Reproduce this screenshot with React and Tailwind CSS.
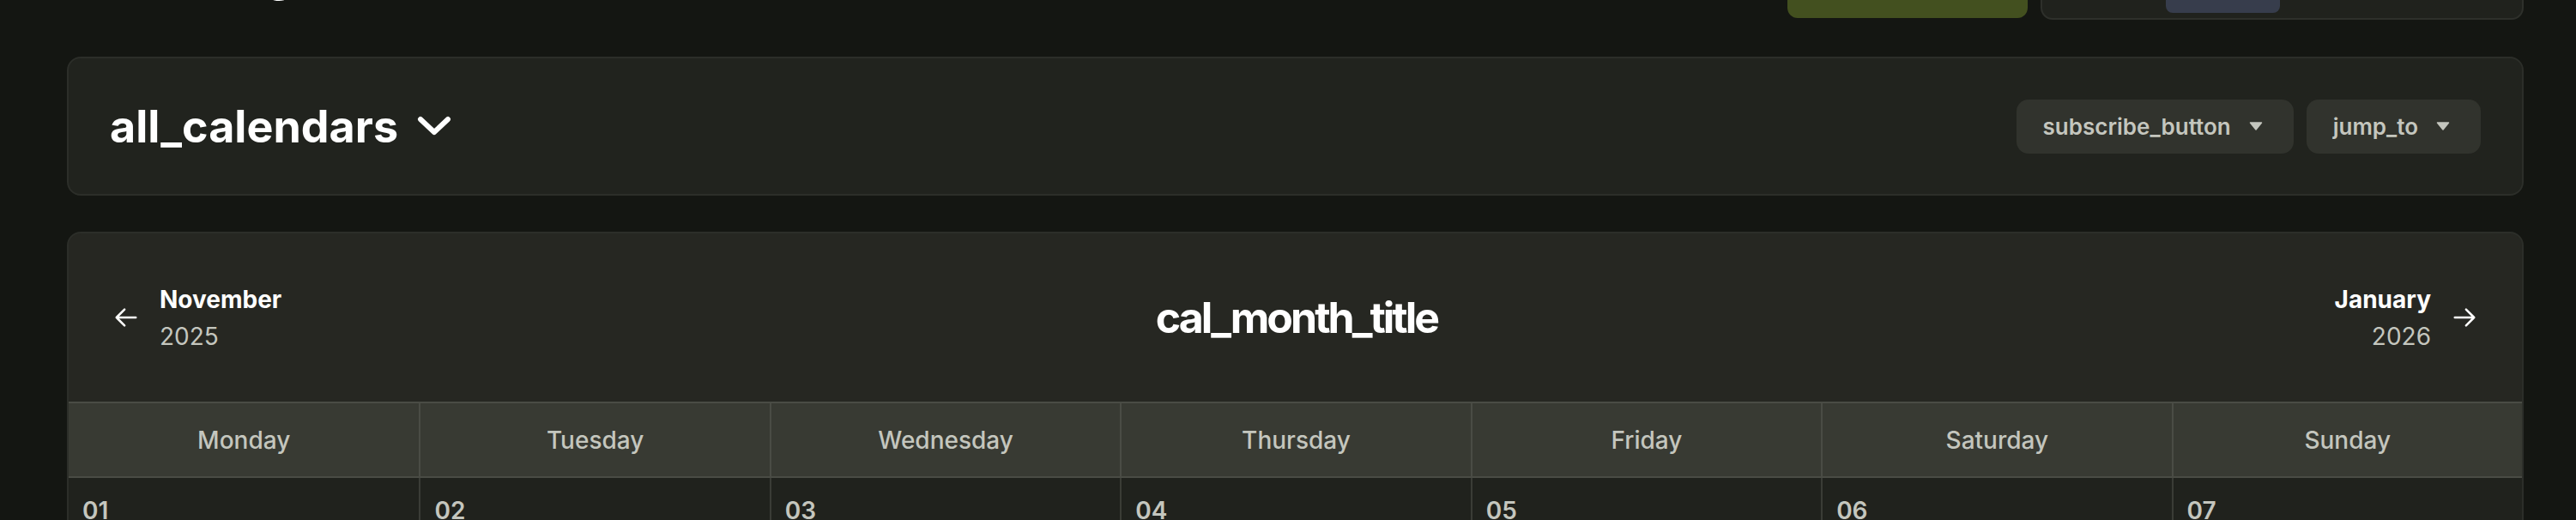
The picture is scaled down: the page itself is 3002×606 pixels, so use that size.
import React from "react";

const DAYS = ["Monday", "Tuesday", "Wednesday", "Thursday", "Friday", "Saturday", "Sunday"];

function Arrow({ dir = "left" }) {
  const d =
    dir === "left"
      ? "M10.5 19.5 3 12m0 0 7.5-7.5M3 12h18"
      : "M13.5 4.5 21 12m0 0-7.5 7.5M21 12H3";
  return (
    <svg width="30" height="30" viewBox="0 0 24 24" fill="none" stroke="currentColor" strokeWidth="2" strokeLinecap="round" strokeLinejoin="round" className="shrink-0 text-white">
      <path d={d} />
    </svg>
  );
}

function Caret() {
  return (
    <svg width="16" height="10" viewBox="0 0 16 10" className="shrink-0">
      <path d="M1.5 1h13L8 9z" fill="#c4c6be" stroke="#c4c6be" strokeWidth="1.5" strokeLinejoin="round" />
    </svg>
  );
}

function Dropdown({ label }) {
  return (
    <button className="flex h-[63px] items-center gap-[21px] rounded-[14px] bg-[#31332d] pl-[31px] pr-[36px] text-[26px] font-semibold text-[#c4c6be]">
      {label}
      <Caret />
    </button>
  );
}

function MonthLink({ month, year, dir }) {
  const right = dir === "right";
  return (
    <div className={`flex items-center gap-6 ${right ? "flex-row-reverse justify-self-end" : "justify-self-start"}`}>
      <Arrow dir={dir} />
      <div className={`flex flex-col pt-[2px] text-[28px] leading-[43px] ${right ? "items-end" : "items-start"}`}>
        <span className="font-bold text-white">{month}</span>
        <span className="text-[#c4c6be]">{year}</span>
      </div>
    </div>
  );
}

export default function App() {
  return (
    <div className="h-[606px] overflow-hidden bg-[#141612] pl-[78px] pr-[61px] font-['Inter',sans-serif] text-white">
      {/* top bar, scrolled mostly out of view */}
      <div className="flex h-[23px] items-end justify-between overflow-hidden">
        <h2 className="mb-[25px] pl-[182px] text-[52px] font-bold leading-[52px] tracking-tight">organizer_view</h2>
        <div className="flex items-end gap-[15px]">
          <div className="mb-[2px] h-[60px] w-[280px] rounded-[12px] bg-[#43501f]" />
          <div className="flex h-[60px] w-[563px] items-end rounded-[14px] border-2 border-[#2e302b] bg-[#20221d] pl-[144px]">
            <div className="mb-[6px] h-[40px] w-[133px] rounded-[8px] bg-[#373d4c]" />
          </div>
        </div>
      </div>

      {/* calendar picker */}
      <div className="mt-[43px] flex h-[162px] items-center justify-between rounded-2xl border-2 border-[#2c2e29] bg-[#21231e] px-12">
        <div className="flex items-center gap-[22px]">
          <h1 className="text-[52px] font-bold leading-[63px]">all_calendars</h1>
          <svg width="40" height="24" viewBox="0 0 40 24" fill="none" stroke="currentColor" strokeWidth="6" strokeLinecap="round" strokeLinejoin="round">
            <path d="M4 4 20 19 36 4" />
          </svg>
        </div>
        <div className="flex items-center gap-[15px]">
          <Dropdown label="subscribe_button" />
          <Dropdown label="jump_to" />
        </div>
      </div>

      {/* month view */}
      <div className="mt-[42px] overflow-hidden rounded-t-2xl border-2 border-[#2c2e29] bg-[#262722]">
        <div className="grid h-[196px] grid-cols-[1fr_auto_1fr] items-center px-[52px]">
          <MonthLink month="November" year="2025" dir="left" />
          <h1 className="pl-[3px] text-[50px] font-bold leading-[63px] tracking-[-3px]">cal_month_title</h1>
          <MonthLink month="January" year="2026" dir="right" />
        </div>

        <div className="grid grid-cols-7 border-y-2 border-[#4a4c45] bg-[#383a33]">
          {DAYS.map((d, i) => (
            <div key={d} className={`flex h-[85px] items-center justify-center text-[28px] font-medium text-[#c4c6be] ${i > 0 ? "border-l-2 border-[#4a4c45]" : ""}`}>
              {d}
            </div>
          ))}
        </div>

        <div className="grid grid-cols-7 bg-[#20221d]">
          {DAYS.map((d, i) => (
            <div key={d} className={`h-[220px] px-4 pt-[17px] text-[28px] font-semibold leading-[42px] text-[#c4c6be] ${i > 0 ? "border-l-2 border-[#3a3c36]" : ""}`}>
              {String(i + 1).padStart(2, "0")}
            </div>
          ))}
        </div>
      </div>
    </div>
  );
}
